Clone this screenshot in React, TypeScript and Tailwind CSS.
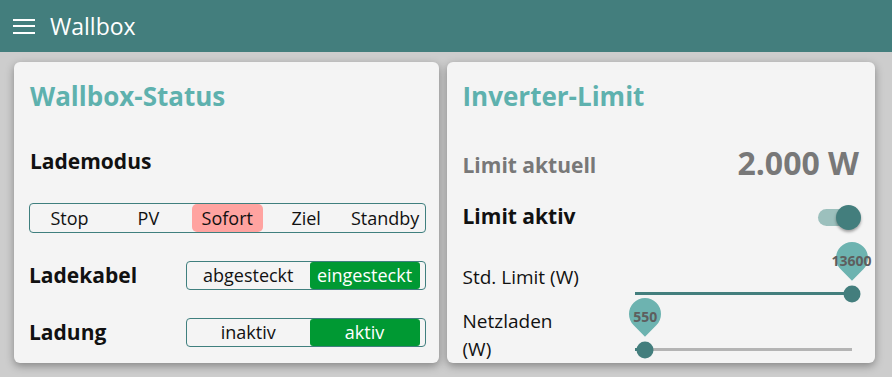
import React from "react";

const Segmented = () => {
  const modes = ["Stop", "PV", "Sofort", "Ziel", "Standby"];
  return (
    <div className="mt-[28px] flex h-[30px] rounded-[4px] border border-[#3f7f7e]">
      {modes.map((m) => (
        <div key={m} className="flex flex-1 items-center justify-center">
          {m === "Sofort" ? (
            <div className="mx-[4px] flex h-full w-full items-center justify-center rounded-[5px] bg-[#ffa3a0]">
              {m}
            </div>
          ) : (
            m
          )}
        </div>
      ))}
    </div>
  );
};

const StatusRow = ({ label, off, on }: { label: string; off: string; on: string }) => (
  <div className="mt-[28px] flex h-[29px] items-center">
    <div className="w-[157px] text-[21px] font-bold text-[#111]">{label}</div>
    <div className="flex h-full flex-1 overflow-hidden rounded-[4px] border border-[#3f7f7e]">
      <div className="flex flex-1 items-center justify-center">{off}</div>
      <div className="flex w-[110px] items-center justify-center rounded-[3px] bg-[#009933] text-white">
        {on}
      </div>
      <div className="w-[5px]" />
    </div>
  </div>
);

const Slider = ({ pct, value, full }: { pct: number; value: string; full?: boolean }) => (
  <div className={`relative h-[3px] w-[217px] ${full ? "bg-[#437e7d]" : "bg-[#b4b4b4]"}`}>
    <div className="absolute left-0 top-0 h-full bg-[#437e7d]" style={{ width: `${pct}%` }} />
    <div
      className="absolute top-1/2 h-[17px] w-[17px] -translate-x-1/2 -translate-y-1/2 rounded-full bg-[#437e7d]"
      style={{ left: `${pct}%` }}
    />
    <div className="absolute top-[-50px] h-[32px] w-[32px] -translate-x-1/2" style={{ left: `${pct}%` }}>
      <div className="absolute inset-0 -rotate-45 rounded-[50%_50%_50%_0] bg-[#6db3b0]" />
      <span className="absolute inset-0 flex items-center justify-center pt-[4px] text-[14px] font-bold text-[#5e5e5e]">
        {value}
      </span>
    </div>
  </div>
);

export default function App() {
  return (
    <div className="h-[377px] w-[892px] overflow-hidden bg-[#cdcdcd] font-['Open_Sans',sans-serif] text-[18px] text-[#111]">
      {/* Header */}
      <header className="flex h-[52px] items-center bg-[#437e7d] pl-[13px] text-white">
        <div className="flex w-[22px] flex-col gap-[4.5px]">
          <span className="h-[2px] bg-white" />
          <span className="h-[2px] bg-white" />
          <span className="h-[2px] bg-white" />
        </div>
        <span className="ml-[15px] text-[23px]">Wallbox</span>
      </header>

      <div className="flex gap-2 pl-[14px] pr-[17px] pt-[10px]">
        {/* Wallbox-Status */}
        <section className="h-[301px] flex-1 overflow-hidden rounded-[6px] bg-[#f4f4f4] pl-[15px] pr-[13px] pt-4 shadow-[0_3px_8px_rgba(0,0,0,0.35)]">
          <h2 className="h-9 pl-[1px] text-[26px] font-bold leading-9 text-[#5eb1ae]">Wallbox-Status</h2>
          <div className="mt-[33px] h-7 pl-[1px] text-[21px] font-bold leading-7">Lademodus</div>
          <Segmented />
          <StatusRow label="Ladekabel" off="abgesteckt" on="eingesteckt" />
          <StatusRow label="Ladung" off="inaktiv" on="aktiv" />
        </section>

        {/* Inverter-Limit */}
        <section className="h-[301px] flex-1 rounded-[6px] bg-[#f4f4f4] pl-4 pr-4 pt-4 shadow-[0_3px_8px_rgba(0,0,0,0.35)]">
          <h2 className="h-9 text-[26px] font-bold leading-9 text-[#5eb1ae]">Inverter-Limit</h2>
          <div className="mt-[27px] flex h-[44px] items-center justify-between text-[#787878]">
            <span className="pt-[6px] text-[21px] font-bold">Limit aktuell</span>
            <span className="text-[32px] font-bold">2.000 W</span>
          </div>
          <div className="mt-[18px] flex h-7 items-center justify-between">
            <span className="text-[21px] font-bold">Limit aktiv</span>
            <div className="relative -mr-[2px] h-[25px] w-[43px]">
              <div className="absolute left-0 top-[4px] h-[17px] w-[38px] rounded-full bg-[#9cc0bd]" />
              <div className="absolute right-0 top-0 h-[25px] w-[25px] rounded-full bg-[#437e7d] shadow-[0_2px_3px_rgba(0,0,0,0.35)]" />
            </div>
          </div>
          <div className="mt-[33px] flex h-[31px]">
            <div className="h-[26px] w-[172px] text-[19px] leading-[26px]">Std. Limit (W)</div>
            <div className="pt-[28px]">
              <Slider pct={100} value="13600" full />
            </div>
          </div>
          <div className="mt-[12px] flex">
            <div className="w-[172px]">
              <div className="max-w-[110px] text-[19px] leading-[28px]">Netzladen (W)</div>
            </div>
            <div className="pt-[41px]">
              <Slider pct={5} value="550" />
            </div>
          </div>
        </section>
      </div>
    </div>
  );
}
